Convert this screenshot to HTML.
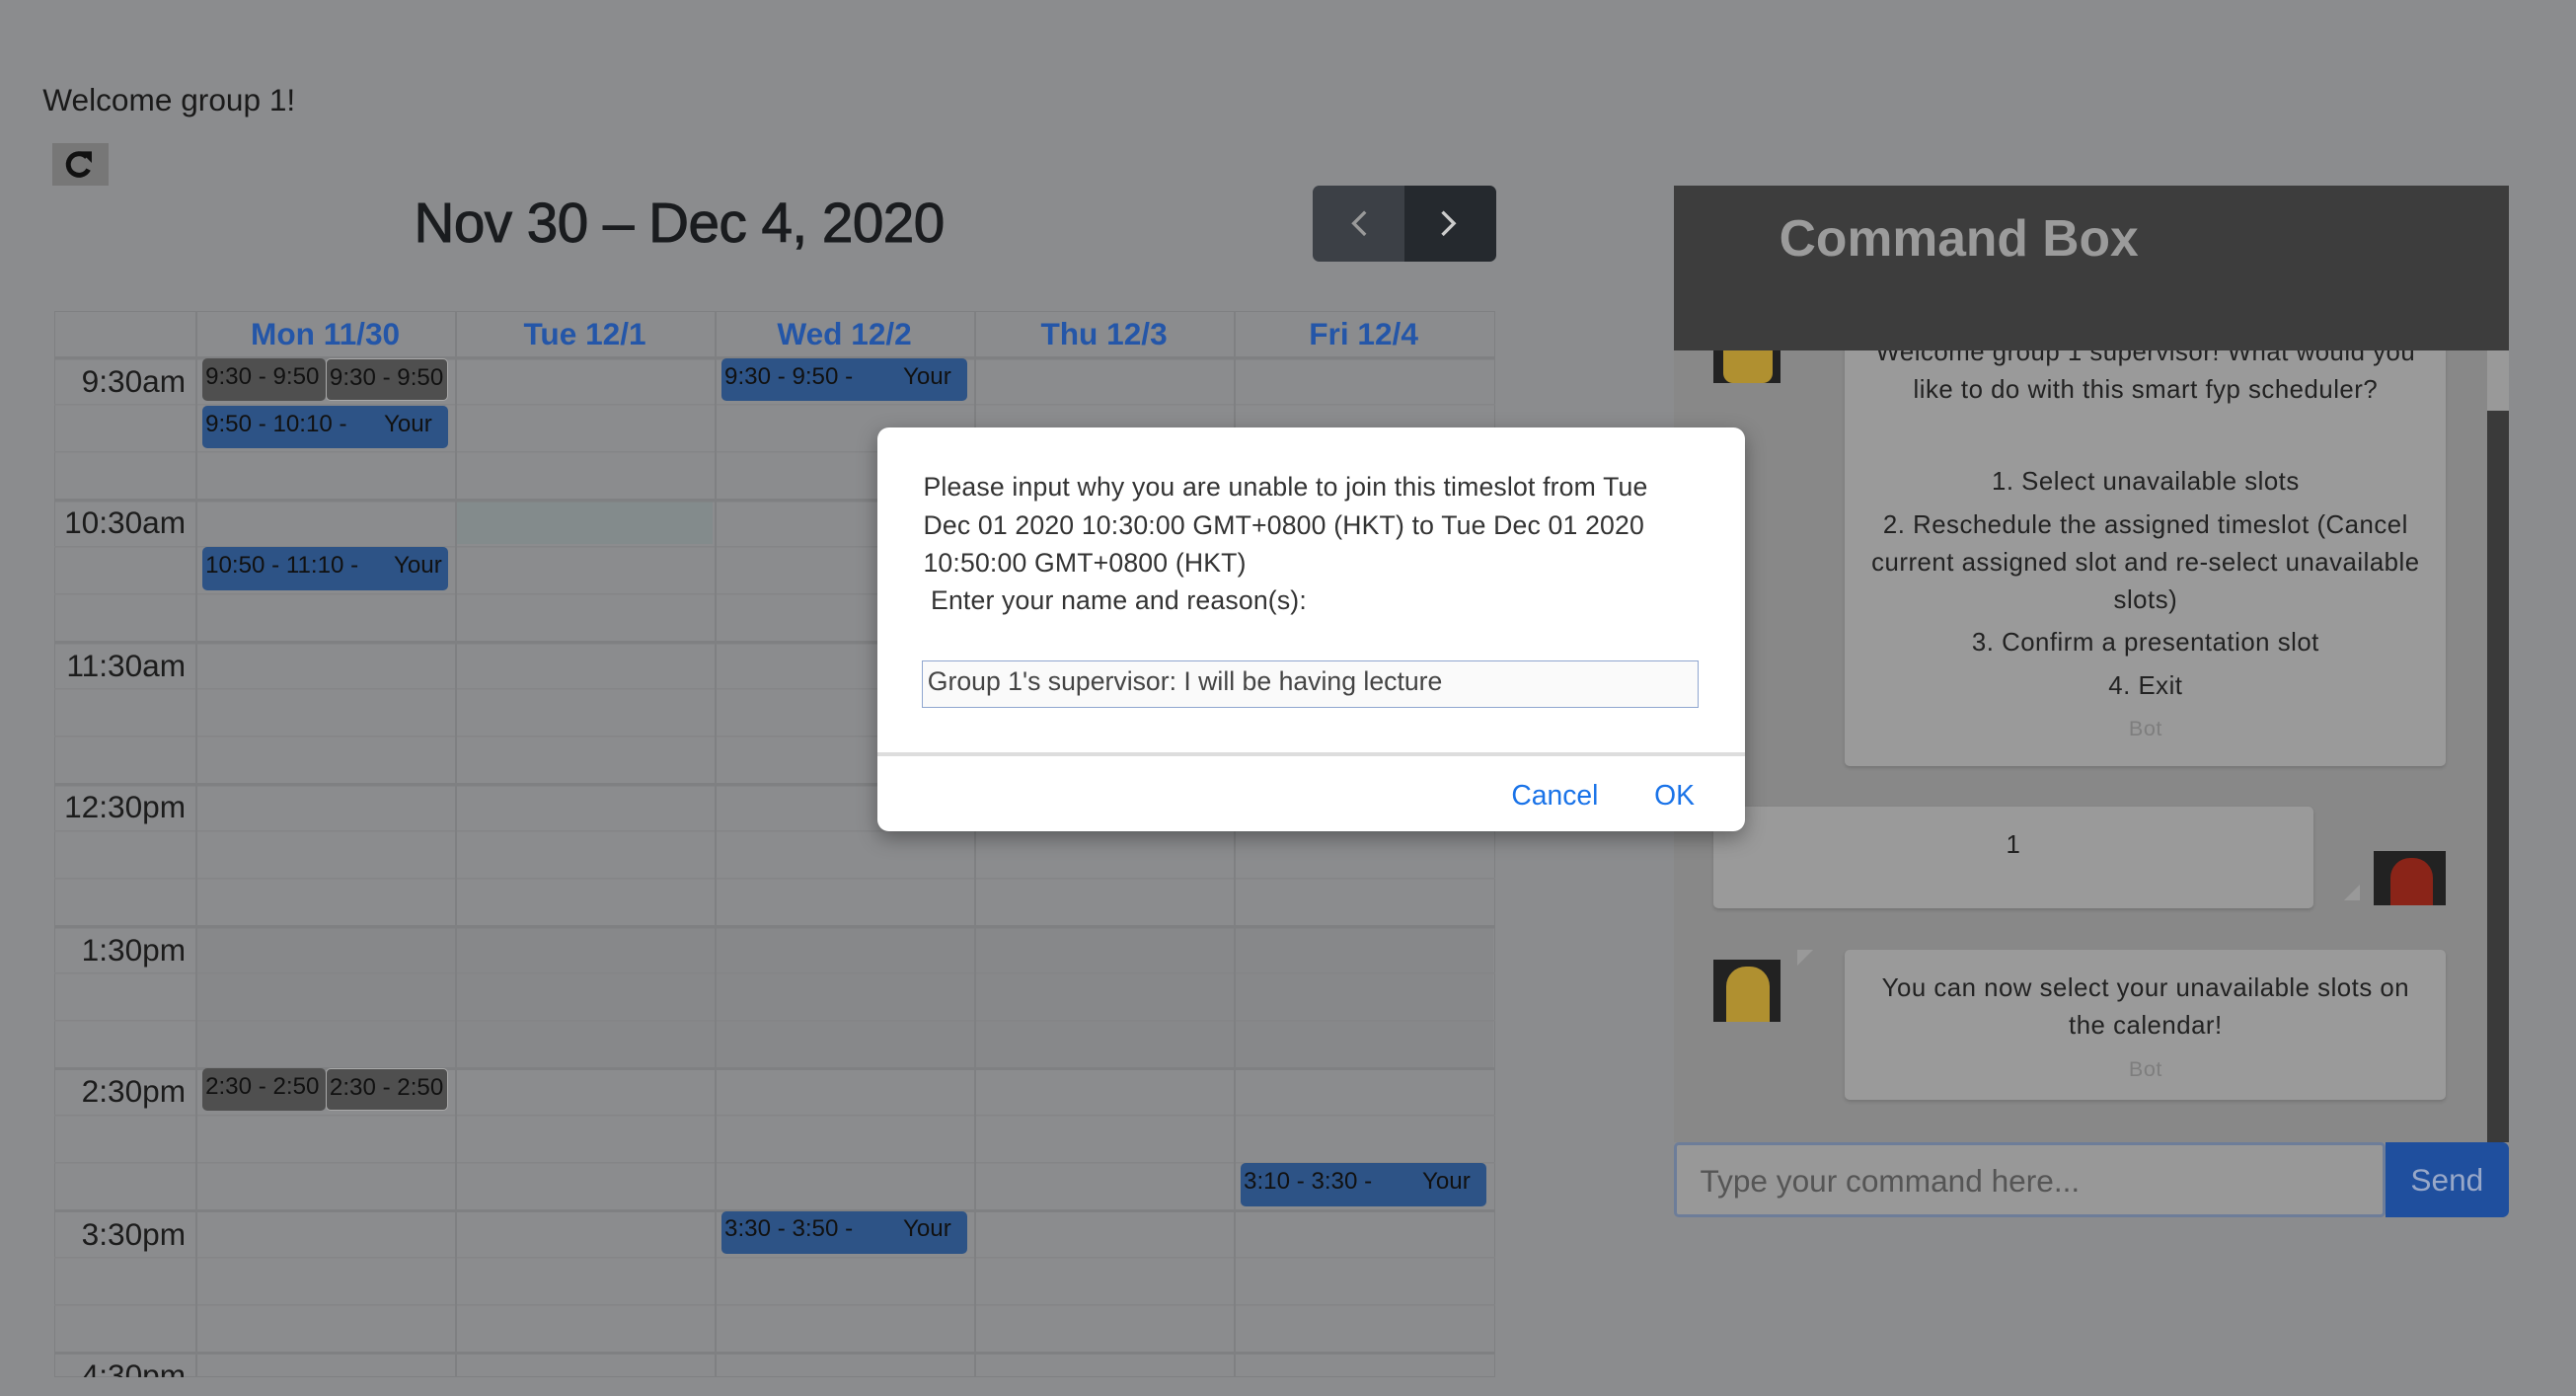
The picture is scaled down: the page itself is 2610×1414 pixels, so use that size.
<!DOCTYPE html>
<html><head><meta charset="utf-8"><style>
html,body{margin:0;padding:0;background:#8b8c8e;overflow:hidden;width:2610px;height:1414px}
#w{zoom:1.66454;position:relative;width:1568px;height:850px;font-family:"Liberation Sans",Arial,sans-serif;color:#1a1a1a}
.a{position:absolute}
.ev{position:absolute;background:#2d5386;border-radius:3px;font-size:14.5px;color:#111;white-space:nowrap;overflow:hidden;padding:1px 2px;box-sizing:border-box;height:26px;line-height:20px}
.ev.g{background:#4f4f4f;}
.ev span{position:absolute;right:10px;top:1px}
.tl{position:absolute;right:1455px;font-size:19px;color:#1c1c1c;text-align:right;width:90px}
.dh{position:absolute;top:192px;font-size:19px;font-weight:bold;color:#2456a8;text-align:center;width:158px}
.bub{position:absolute;background:#9a9a9a;border-radius:3px;box-shadow:0 1px 2px rgba(0,0,0,.15);text-align:center;font-size:15.5px;color:#222;line-height:23px;letter-spacing:0.3px}
.bot{font-size:13px;color:#7e7e7e}
</style></head><body><div id="w">
<div class="a" style="left:26px;top:50px;font-size:19px">Welcome group 1!</div>
<div class="a" style="left:32px;top:87px;width:34px;height:26px;background:#777"><svg width="34" height="26" viewBox="0 0 34 26"><path d="M21 8.5 A6.5 6.5 0 1 0 22 16" fill="none" stroke="#111" stroke-width="3"/><path d="M17 5 L24 5 L24 12 Z" fill="#111"/></svg></div>
<div class="a" style="left:252px;top:116px;font-size:34px;font-weight:500;color:#1a1c1f;letter-spacing:-0.3px;-webkit-text-stroke:0.6px #1a1c1f">Nov 30 – Dec 4, 2020</div>
<div class="a" style="left:799px;top:113px;width:56px;height:46px;background:#3c4046;border-radius:4px 0 0 4px"></div>
<div class="a" style="left:855px;top:113px;width:56px;height:46px;background:#25292e;border-radius:0 4px 4px 0"></div>
<svg class="a" style="left:799px;top:113px" width="112" height="46"><path d="M32 16 L25 23 L32 30" fill="none" stroke="#999" stroke-width="2"/><path d="M79 16 L86 23 L79 30" fill="none" stroke="#ccc" stroke-width="2"/></svg>
<div class="a" style="left:33px;top:189px;width:877px;height:649px;border:1px solid #7f8082;box-sizing:border-box"></div>
<div class="a" style="left:119px;top:563px;width:790px;height:87px;background:#87888a"></div>
<div class="a" style="left:278px;top:304px;width:156px;height:27px;background:#838b8c"></div>
<div class="a" style="left:33px;top:217px;width:877px;height:621px;background:repeating-linear-gradient(to bottom,#7f8082 0,#7f8082 2px,transparent 2px,transparent 28.83px,#848587 28.83px,#848587 29.83px,transparent 29.83px,transparent 57.66px,#848587 57.66px,#848587 58.66px,transparent 58.66px,transparent 86.5px)"></div>
<div class="a" style="left:119px;top:189px;width:1px;height:649px;background:#7f8082"></div>
<div class="a" style="left:277px;top:189px;width:1px;height:649px;background:#7f8082"></div>
<div class="a" style="left:435px;top:189px;width:1px;height:649px;background:#7f8082"></div>
<div class="a" style="left:593px;top:189px;width:1px;height:649px;background:#7f8082"></div>
<div class="a" style="left:751px;top:189px;width:1px;height:649px;background:#7f8082"></div>
<div class="dh" style="left:119px">Mon 11/30</div>
<div class="dh" style="left:277px">Tue 12/1</div>
<div class="dh" style="left:435px">Wed 12/2</div>
<div class="dh" style="left:593px">Thu 12/3</div>
<div class="dh" style="left:751px">Fri 12/4</div>
<div class="tl" style="top:221px">9:30am</div>
<div class="tl" style="top:307px">10:30am</div>
<div class="tl" style="top:394px">11:30am</div>
<div class="tl" style="top:480px">12:30pm</div>
<div class="tl" style="top:567px">1:30pm</div>
<div class="tl" style="top:653px">2:30pm</div>
<div class="tl" style="top:740px">3:30pm</div>
<div class="a" style="left:33px;top:826px;width:86px;height:12px;overflow:hidden"><div style="position:absolute;right:6px;top:0;font-size:19px">4:30pm</div></div>
<div class="ev g" style="left:123px;top:218px;width:75px">9:30 - 9:50</div>
<div class="ev g" style="left:198px;top:218px;width:75px;border:1px solid #aaa">9:30 - 9:50</div>
<div class="ev" style="left:123px;top:247px;width:150px">9:50 - 10:10 -<span>Your</span></div>
<div class="ev" style="left:123px;top:333px;width:150px">10:50 - 11:10 -<span style="right:4px">Your</span></div>
<div class="ev" style="left:439px;top:218px;width:150px">9:30 - 9:50 -<span>Your</span></div>
<div class="ev g" style="left:123px;top:650px;width:75px">2:30 - 2:50</div>
<div class="ev g" style="left:198px;top:650px;width:75px;border:1px solid #aaa">2:30 - 2:50</div>
<div class="ev" style="left:755px;top:708px;width:150px">3:10 - 3:30 -<span>Your</span></div>
<div class="ev" style="left:439px;top:737px;width:150px">3:30 - 3:50 -<span>Your</span></div>
<div class="a" style="left:1019px;top:213px;width:508px;height:482px;background:#888;overflow:hidden">
 <div class="a" style="left:495px;top:0;width:13px;height:37px;background:#999"></div>
 <div class="a" style="left:495px;top:37px;width:13px;height:445px;background:#3a3a3a"></div>
 <div class="a" style="left:24px;top:-10px;width:41px;height:30px;background:#222"><div style="position:absolute;left:6px;top:0;width:30px;height:30px;background:#b09030;border-radius:0 0 6px 6px"></div></div>
 <div class="bub" style="left:104px;top:-20px;width:366px;height:273px"><div style="padding:10px 14px 0">Welcome group 1 supervisor! What would you like to do with this smart fyp scheduler?<br><br><div style="margin-top:10px">1. Select unavailable slots</div><div style="margin-top:3px">2. Reschedule the assigned timeslot (Cancel current assigned slot and re-select unavailable slots)</div><div style="margin-top:3px">3. Confirm a presentation slot</div><div style="margin-top:3px">4. Exit</div><div class="bot" style="margin-top:3px">Bot</div></div></div>
 <div class="bub" style="left:24px;top:278px;width:365px;height:62px;padding-top:12px;box-sizing:border-box">1</div>
 <div class="a" style="left:408px;top:325px;width:0;height:0;border-left:10px solid transparent;border-bottom:10px solid #999"></div>
 <div class="a" style="left:426px;top:305px;width:44px;height:33px;background:#222"><div style="position:absolute;left:10px;top:4px;width:26px;height:29px;background:#8a2418;border-radius:12px 12px 0 0"></div></div>
 <div class="a" style="left:24px;top:371px;width:41px;height:38px;background:#222"><div style="position:absolute;left:8px;top:4px;width:26px;height:34px;background:#b09030;border-radius:12px 12px 0 0"></div></div>
 <div class="a" style="left:75px;top:365px;width:0;height:0;border-right:10px solid transparent;border-top:10px solid #999"></div>
 <div class="bub" style="left:104px;top:365px;width:366px;height:91px;padding:12px 18px 0;box-sizing:border-box">You can now select your unavailable slots on the calendar!<div class="bot" style="margin-top:3px">Bot</div></div>
</div>
<div class="a" style="left:1019px;top:113px;width:508px;height:100px;background:#3d3d3d"><div style="position:absolute;left:64px;top:14px;font-size:31px;font-weight:bold;color:#9b9b9b">Command Box</div></div>
<div class="a" style="left:1019px;top:695px;width:433px;height:46px;background:#989898;border:2px solid #6d7d99;box-sizing:border-box;border-radius:3px;font-size:19px;color:#555;padding:11px 14px">Type your command here...</div>
<div class="a" style="left:1452px;top:695px;width:75px;height:46px;background:#1f4f9e;border-radius:0 4px 4px 0;color:#98a8c8;font-size:19px;text-align:center;line-height:46px">Send</div>
<div class="a" style="left:534px;top:260px;width:528px;height:246px;background:#fff;border-radius:7px;box-shadow:0 4px 12px rgba(0,0,0,.35)">
 <div style="position:absolute;left:28px;top:25px;width:470px;font-size:16px;line-height:23px;color:#333;letter-spacing:0.1px">Please input why you are unable to join this timeslot from Tue Dec 01 2020 10:30:00 GMT+0800 (HKT) to Tue Dec 01 2020 10:50:00 GMT+0800 (HKT)<br>&nbsp;Enter your name and reason(s):</div>
 <div style="position:absolute;left:27px;top:142px;width:473px;height:29px;border:1px solid #8fa6cf;background:#fafafa;box-sizing:border-box;font-size:16px;color:#444;padding:3px 3px">Group 1's supervisor: I will be having lecture</div>
 <div style="position:absolute;left:0;top:198px;width:528px;height:2px;background:#ddd"></div>
 <div style="position:absolute;left:386px;top:214px;font-size:17px;color:#1a73e8">Cancel</div>
 <div style="position:absolute;left:473px;top:214px;font-size:17px;color:#1a73e8">OK</div>
</div>
</div></body></html>
